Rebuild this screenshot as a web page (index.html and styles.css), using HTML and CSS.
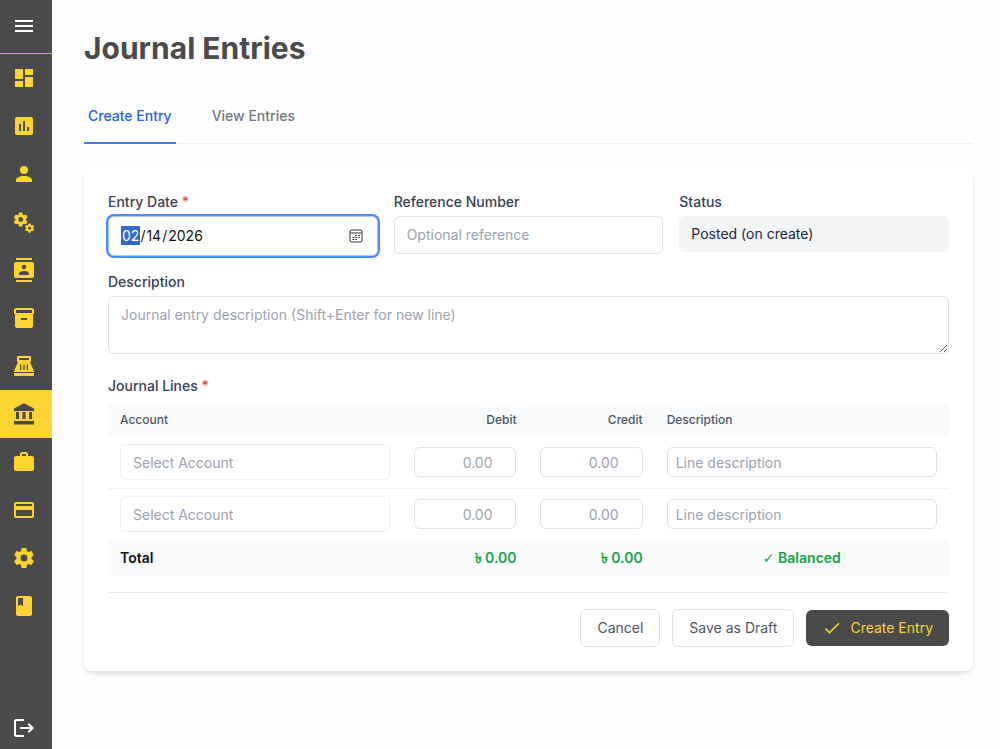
FILE: index.html
```html
<!DOCTYPE html>
<html lang="en">
<head>
<meta charset="utf-8">
<meta name="viewport" content="width=device-width, initial-scale=1">
<title>Journal Entries</title>
<link rel="stylesheet" href="styles.css">
</head>
<body>
<div class="app">
  <aside class="sidebar">
    <div class="sidebar-head">
      <button class="icon-button" type="button" aria-label="Toggle menu"><svg class="icon" viewBox="0 0 24 24"><path d="M3 6h18v2H3V6m0 5h18v2H3v-2m0 5h18v2H3v-2z"/></svg></button>
    </div>
    <nav class="nav" aria-label="Main">
      <a class="nav-item" href="#dashboard" aria-label="Dashboard"><svg class="icon" viewBox="0 0 24 24"><path d="M13 3v6h8V3m-8 18h8V11h-8M3 21h8v-6H3m0-2h8V3H3v10z"/></svg></a>
      <a class="nav-item" href="#reports" aria-label="Reports"><svg class="icon" viewBox="0 0 24 24"><path d="M9 17H7v-7h2v7m4 0h-2V7h2v10m4 0h-2v-4h2v4m2-14H5a2 2 0 0 0-2 2v14a2 2 0 0 0 2 2h14a2 2 0 0 0 2-2V5a2 2 0 0 0-2-2z"/></svg></a>
      <a class="nav-item" href="#users" aria-label="Users"><svg class="icon" viewBox="0 0 24 24"><path d="M12 4a4 4 0 1 1 0 8 4 4 0 0 1 0-8m0 10c4.420 0 8 1.790 8 4v2H4v-2c0-2.210 3.580-4 8-4z"/></svg></a>
      <a class="nav-item" href="#operations" aria-label="Operations"><svg class="icon" viewBox="0 0 24 24"><defs><path id="cog" d="M12 15.500A3.500 3.500 0 0 1 8.500 12 3.500 3.500 0 0 1 12 8.500a3.500 3.500 0 0 1 3.500 3.500 3.500 3.500 0 0 1-3.500 3.500m7.430-2.530c.040-.320.070-.640.070-.970 0-.330-.030-.660-.070-1l2.110-1.630c.190-.150.240-.420.120-.640l-2-3.460c-.120-.220-.390-.31-.61-.22l-2.490 1c-.52-.39-1.060-.73-1.690-.98l-.37-2.650A.506.506 0 0 0 14 2h-4c-.25 0-.46.180-.5.420l-.37 2.650c-.63.250-1.170.590-1.690.980l-2.490-1c-.22-.09-.49 0-.61.220l-2 3.460c-.13.220-.070.490.120.640L4.570 11c-.040.340-.070.670-.070 1 0 .330.030.650.070.970l-2.110 1.660c-.19.150-.25.420-.12.640l2 3.460c.120.220.390.300.610.220l2.490-1.010c.520.400 1.060.740 1.690.990l.370 2.650c.040.240.250.420.500.420h4c.250 0 .460-.18.500-.42l.37-2.650c.630-.26 1.170-.59 1.690-.99l2.490 1.010c.220.080.490 0 .610-.22l2-3.460c.120-.22.070-.49-.12-.64l-2.110-1.660z"/></defs><use href="#cog" transform="translate(.3 1.100) scale(.7)"/><use href="#cog" transform="translate(12.100 12.600) scale(.46)"/></svg></a>
      <a class="nav-item" href="#contacts" aria-label="Contacts"><svg class="icon" viewBox="0 0 24 24"><path d="M20 0H4v2h16V0M4 24h16v-2H4v2M20 4H4a2 2 0 0 0-2 2v12a2 2 0 0 0 2 2h16a2 2 0 0 0 2-2V6a2 2 0 0 0-2-2m-8 2.750a2.250 2.250 0 1 1 0 4.500 2.250 2.250 0 0 1 0-4.500M17 17H7v-1.500c0-1.670 3.330-2.500 5-2.500s5 .83 5 2.500V17z"/></svg></a>
      <a class="nav-item" href="#inventory" aria-label="Inventory"><svg class="icon" viewBox="0 0 24 24"><path fill-rule="evenodd" d="M20 2H4c-1 0-2 .9-2 2v3.010c0 .72.430 1.340 1 1.690V20c0 1.100 1.100 2 2 2h14c.900 0 2-.9 2-2V8.700c.570-.35 1-.97 1-1.690V4c0-1.100-1-2-2-2M15 14H9v-2h6v2m5-7H4V4h16v3z"/></svg></a>
      <a class="nav-item" href="#sales" aria-label="Sales"><svg class="icon" viewBox="0 0 24 24"><path fill-rule="evenodd" d="M6 2h12a1 1 0 0 1 1 1v4a1 1 0 0 1-1 1L21.700 16.500 22 18H2l.3-1.500L6 8a1 1 0 0 1-1-1V3a1 1 0 0 1 1-1m1 2v2h10V4H7m1 6.500v5.500h1.300v-5.500H8m3.350 0v5.500h1.300v-5.500h-1.300m3.350 0v5.500H16v-5.500h-1.300"/><path d="M2 19h20v2a1 1 0 0 1-1 1H3a1 1 0 0 1-1-1v-2z"/></svg></a>
      <a class="nav-item nav-item-active" href="#accounting" aria-label="Accounting" aria-current="page"><svg class="icon" viewBox="0 0 24 24"><path d="M12 1.300L2 6.500V9h20V6.500L12 1.300M4 10v7h3v-7H4m6.500 0v7h3v-7h-3m6.500 0v7h3v-7h-3M2 19v3.500h20V19H2z"/></svg></a>
      <a class="nav-item" href="#projects" aria-label="Projects"><svg class="icon" viewBox="0 0 24 24"><path fill-rule="evenodd" d="M10 2h4a2 2 0 0 1 2 2v2h4a2 2 0 0 1 2 2v11a2 2 0 0 1-2 2H4a2 2 0 0 1-2-2V8c0-1.110.890-2 2-2h4V4c0-1.110.890-2 2-2m4 4V4h-4v2h4z"/></svg></a>
      <a class="nav-item" href="#payments" aria-label="Payments"><svg class="icon" viewBox="0 0 24 24"><path fill-rule="evenodd" d="M20 8H4V6h16m0 12H4v-6h16m0-8H4c-1.110 0-2 .890-2 2v12a2 2 0 0 0 2 2h16a2 2 0 0 0 2-2V6c0-1.110-.9-2-2-2z"/></svg></a>
      <a class="nav-item" href="#settings" aria-label="Settings"><svg class="icon" viewBox="0 0 24 24"><use href="#cog"/></svg></a>
      <a class="nav-item" href="#ledger" aria-label="Ledger"><svg class="icon" viewBox="0 0 24 24"><path fill-rule="evenodd" d="M6 2h12a2 2 0 0 1 2 2v16a2 2 0 0 1-2 2H6a2 2 0 0 1-2-2V4a2 2 0 0 1 2-2m0 2v8l2.500-1.500L11 12V4H6z"/></svg></a>
    </nav>
    <button class="logout" type="button" aria-label="Log out"><svg class="icon" viewBox="0 0 24 24"><path d="M12 3H4a2 2 0 0 0-2 2v14a2 2 0 0 0 2 2h8v-2H4V5h8V3zM8 11v2h10.200l-2.600 2.600L17 17l5-5-5-5-1.400 1.400 2.600 2.600H8z"/></svg></button>
  </aside>

  <main class="main">
    <h1 class="title">Journal Entries</h1>
    <div class="tabs" role="tablist">
      <button class="tab tab-active" type="button" role="tab" aria-selected="true">Create Entry</button>
      <button class="tab" type="button" role="tab" aria-selected="false">View Entries</button>
    </div>

    <form class="card">
      <div class="field-row">
        <div class="field">
          <label class="label" for="entry-date">Entry Date <span class="required">*</span></label>
          <div class="date-box">
            <input class="input input-date" id="entry-date" type="date" value="2026-02-14" required autofocus>
            <svg class="date-icon" viewBox="0 0 14 14"><rect x="1" y="1" width="12" height="12" rx="2"/><path d="M1 4h12"/><path class="date-dots" d="M6 6.500h5M3.500 8.500H11M3.500 10.500H8"/></svg>
          </div>
        </div>
        <div class="field">
          <label class="label" for="reference">Reference Number</label>
          <input class="input" id="reference" type="text" placeholder="Optional reference">
        </div>
        <div class="field">
          <span class="label">Status</span>
          <div class="status">Posted (on create)</div>
        </div>
      </div>

      <div class="field">
        <label class="label" for="description">Description</label>
        <textarea class="input textarea" id="description" rows="2" placeholder="Journal entry description (Shift+Enter for new line)"></textarea>
      </div>

      <section class="lines">
        <h2 class="label" id="lines-label">Journal Lines <span class="required">*</span></h2>
        <table class="table" aria-labelledby="lines-label">
          <thead>
            <tr><th class="col-wide">Account</th><th class="col-amount">Debit</th><th class="col-amount">Credit</th><th class="col-wide">Description</th></tr>
          </thead>
          <tbody>
            <tr>
              <td><input class="input account" type="text" placeholder="Select Account" aria-label="Account, line 1"></td>
              <td><input class="input small amount" type="number" placeholder="0.00" aria-label="Debit, line 1"></td>
              <td><input class="input small amount" type="number" placeholder="0.00" aria-label="Credit, line 1"></td>
              <td><input class="input small" type="text" placeholder="Line description" aria-label="Description, line 1"></td>
            </tr>
            <tr>
              <td><input class="input account" type="text" placeholder="Select Account" aria-label="Account, line 2"></td>
              <td><input class="input small amount" type="number" placeholder="0.00" aria-label="Debit, line 2"></td>
              <td><input class="input small amount" type="number" placeholder="0.00" aria-label="Credit, line 2"></td>
              <td><input class="input small" type="text" placeholder="Line description" aria-label="Description, line 2"></td>
            </tr>
          </tbody>
          <tfoot>
            <tr><td>Total</td><td class="total">৳ 0.00</td><td class="total">৳ 0.00</td><td class="balance"><span class="tick">✓</span> Balanced</td></tr>
          </tfoot>
        </table>
      </section>

      <div class="actions">
        <button class="button" type="button">Cancel</button>
        <button class="button" type="button">Save as Draft</button>
        <button class="button button-primary" type="submit"><svg class="check" viewBox="0 0 24 24"><path d="M21 7L9 19l-5.500-5.500 1.410-1.410L9 16.170 19.590 5.590 21 7z"/></svg>Create Entry</button>
      </div>
    </form>
  </main>
</div>
</body>
</html>
```

FILE: styles.css
```css
*, *::before, *::after { box-sizing: border-box; }

body {
  margin: 0;
  background: #fefefe;
  color: #111111;
  font-family: Inter, "Liberation Sans", sans-serif;
  font-size: 14px;
  line-height: 20px;
}

button, input, textarea { font: inherit; color: inherit; }
button { cursor: pointer; }

.app { display: flex; min-height: 100vh; }

.sidebar {
  display: flex;
  flex-direction: column;
  flex: 0 0 52px;
  background: #4a4a4a;
  color: #ffffff;
}

.icon { display: block; width: 24px; height: 24px; fill: currentColor; }

.sidebar-head {
  display: flex;
  align-items: center;
  height: 54px;
  padding: 0 0 1px 12px;
  border-bottom: 1px solid #d9b535;
}

.icon-button { padding: 0; border: 0; background: none; }

.nav { flex: 1; color: #fdd432; }

.nav-item {
  display: flex;
  align-items: center;
  height: 48px;
  padding-left: 12px;
  color: inherit;
}

.nav-item-active { background: #fdd432; color: #4a4a4a; }

.logout {
  height: 42px;
  padding: 0 12px;
  border: 0;
  background: none;
}

.main { flex: 1; min-width: 0; padding: 30px 27px 32px 32px; }

.title {
  margin: 0;
  color: #4a4a4a;
  font-size: 30px;
  line-height: 36px;
  font-weight: 700;
}

.tabs {
  display: flex;
  gap: 32px;
  margin-top: 24px;
  border-bottom: 1px solid #f0f1f3;
}

.tab {
  height: 54px;
  padding: 0 4px;
  margin-bottom: -1px;
  border: 0;
  border-bottom: 2px solid transparent;
  background: none;
  color: #6f7680;
  font-weight: 500;
}

.tab-active { border-color: #3b82f6; color: #2563eb; }

.card {
  margin-top: 24px;
  padding: 24px;
  border-radius: 8px;
  background: #ffffff;
  box-shadow: 0 4px 6px -1px rgba(0, 0, 0, 0.1), 0 2px 4px -2px rgba(0, 0, 0, 0.1);
}

.field-row {
  display: grid;
  grid-template-columns: repeat(3, minmax(0, 1fr));
  gap: 16px;
  margin-bottom: 16px;
}

.label {
  display: block;
  margin: 0 0 4px;
  color: #374151;
  font-size: 14px;
  font-weight: 500;
}

.required { color: #ef4444; }

.input {
  display: block;
  width: 100%;
  padding: 8px 12px;
  border: 1px solid #dfe2e7;
  border-radius: 6px;
  background: #ffffff;
}

.input::placeholder { color: #9ca3af; opacity: 1; }

.date-box { position: relative; }
.input-date { height: 40px; outline: none; border-color: #a9c8fb; box-shadow: 0 0 0 2px #4b8cf7; }
.input-date::-webkit-datetime-edit-month-field:focus { background-color: #0078d7 !important; color: #ffffff !important; }
.input-date::-webkit-calendar-picker-indicator { opacity: 0; }

.date-icon {
  position: absolute;
  top: 13px;
  right: 15px;
  width: 14px;
  height: 14px;
  fill: none;
  stroke: #333333;
  pointer-events: none;
}

.date-dots { stroke-dasharray: 2 1; }

.status {
  padding: 8px 12px;
  border-radius: 6px;
  background: #f3f4f6;
  color: #1f2937;
}

.textarea { height: 58px; resize: vertical; }

.lines { margin-top: 22px; }
.lines .label { margin-bottom: 8px; }

.table { width: 100%; border-collapse: collapse; table-layout: fixed; }
.table th, .table td { padding: 8px 12px; }

.table th {
  background: #f8fafc;
  color: #4b5563;
  font-size: 12px;
  line-height: 16px;
  font-weight: 500;
  text-align: left;
}

.table .col-wide { width: 35%; }
.table .col-amount { width: 15%; text-align: right; }
.table tbody tr + tr { box-shadow: inset 0 1px #f0f1f3; }

.account { height: 36px; padding: 7px 12px; border-color: #eeeff1; }
.small { height: 30px; padding: 4px 8px; }
.amount { text-align: right; }

.table tfoot td { background: #f8fafc; font-weight: 600; }
.table .total { color: #16a34a; text-align: right; }
.table .balance { color: #16a34a; text-align: center; }
.tick { font-family: "DejaVu Sans", sans-serif; line-height: 16px; }

.actions {
  display: flex;
  align-items: center;
  justify-content: flex-end;
  gap: 12px;
  margin-top: 16px;
  padding-top: 16px;
  border-top: 1px solid #e9ebee;
}

.button {
  height: 38px;
  padding: 0 16px;
  border: 1px solid #dfe2e7;
  border-radius: 6px;
  background: #ffffff;
  color: #4b5563;
}

.button-primary {
  display: flex;
  align-items: center;
  gap: 8px;
  height: 36px;
  border: 0;
  background: #4a4a4a;
  color: #fdd432;
}

.check { width: 20px; height: 20px; fill: currentColor; }
```
